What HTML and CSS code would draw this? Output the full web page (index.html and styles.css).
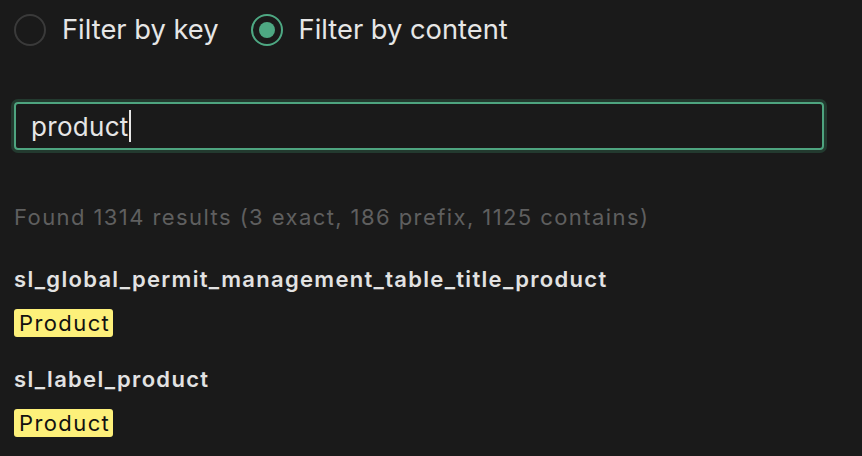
FILE: index.html
```html
<!DOCTYPE html>
<html lang="en">
<head>
<meta charset="utf-8">
<title>Filter</title>
<link rel="stylesheet" href="styles.css">
</head>
<body>
<div class="panel">
  <div class="radios">
    <label class="radio">
      <span class="dot"></span>
      <span class="radio-label">Filter by key</span>
    </label>
    <label class="radio checked">
      <span class="dot"></span>
      <span class="radio-label">Filter by content</span>
    </label>
  </div>

  <div class="search">
    <span class="search-text">product</span><span class="caret"></span>
  </div>

  <div class="summary">Found 1314 results (3 exact, 186 prefix, 1125 contains)</div>

  <div class="results">
    <div class="result">
      <div class="key">sl_global_permit_management_table_title_product</div>
      <div class="value"><mark class="hl">Product</mark></div>
    </div>
    <div class="result">
      <div class="key">sl_label_product</div>
      <div class="value"><mark class="hl">Product</mark></div>
    </div>
  </div>
</div>
</body>
</html>
```
FILE: styles.css
```css
html, body {
  margin: 0;
  padding: 0;
  background: #1a1a1a;
  height: 100%;
  overflow: hidden;
}

body {
  font-family: Inter, "Noto Sans", "Liberation Sans", sans-serif;
  color: #e4e4e4;
}

.panel {
  padding: 14px 0 0 14px;
  width: 810px;
}

.radios {
  display: flex;
  align-items: center;
  height: 32px;
}

.radio {
  display: flex;
  align-items: center;
  gap: 16px;
  font-size: 27.3px;
  line-height: 32px;
  color: #e6e6e6;
}

.radio + .radio {
  margin-left: 32px;
}

.dot {
  box-sizing: border-box;
  width: 32px;
  height: 32px;
  border-radius: 50%;
  border: 2px solid #3a3a3a;
  display: flex;
  align-items: center;
  justify-content: center;
}

.radio.checked .dot {
  border-color: #4ea883;
}

.radio.checked .dot::after {
  content: "";
  width: 16px;
  height: 16px;
  border-radius: 50%;
  background: #4ea883;
}

.search {
  box-sizing: border-box;
  margin-top: 56px;
  height: 48px;
  border: 2px solid #4ea47f;
  border-radius: 4px;
  box-shadow: 0 0 0 3px #233a2f;
  display: flex;
  align-items: center;
  padding-left: 15px;
  font-size: 26px;
  letter-spacing: 0.3px;
  color: #e6e6e6;
}

.caret {
  display: inline-block;
  width: 2px;
  height: 32px;
  background: #e6e6e6;
}

.summary {
  margin-top: 54px;
  font-size: 22px;
  line-height: 26px;
  letter-spacing: 1.42px;
  color: #5f5f5f;
}

.results {
  display: flex;
  flex-direction: column;
  gap: 29px;
  margin-top: 36px;
}

.key {
  font-size: 22px;
  line-height: 26px;
  font-weight: 600;
  letter-spacing: 1.3px;
  color: #e2e2e2;
}

.value {
  margin-top: 17px;
  display: flex;
}

.hl {
  background: #fdf07a;
  color: #111;
  font-size: 22px;
  line-height: 28px;
  letter-spacing: 1.4px;
  padding: 0 3px 0 5px;
  border-radius: 3px;
}
```
